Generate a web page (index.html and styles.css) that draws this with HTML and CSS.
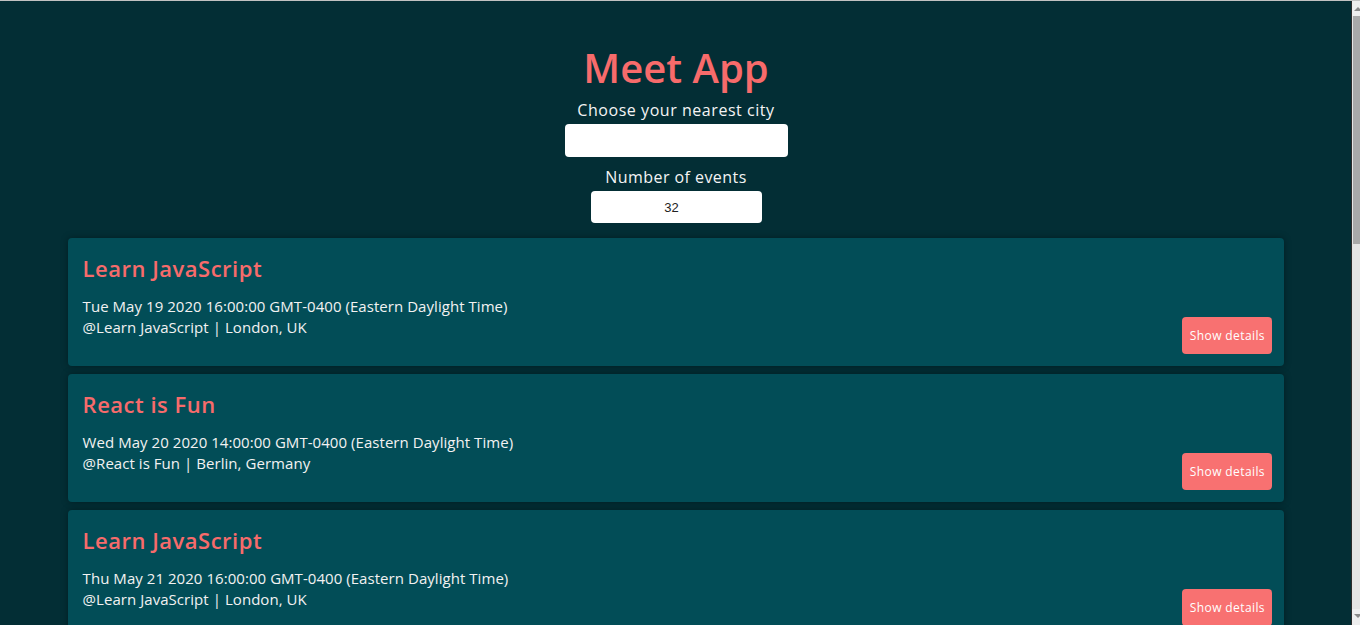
FILE: index.html
```html
<!DOCTYPE html>
<html lang="en">
<head>
<meta charset="utf-8">
<title>Meet App</title>
<link rel="stylesheet" href="styles.css">
</head>
<body>
<div class="app">
  <header class="header">
    <h1 class="app-title">Meet App</h1>
    <label class="field-label" for="city">Choose your nearest city</label>
    <input class="city-input" id="city" type="text" value="">
    <label class="field-label label-number" for="num">Number of events</label>
    <input class="number-input" id="num" type="text" value="32">
  </header>
  <ul class="event-list">
    <li class="event">
      <div class="event-info">
        <h2 class="event-title">Learn JavaScript</h2>
        <p class="event-line event-date">Tue May 19 2020 16:00:00 GMT-0400 (Eastern Daylight Time)</p>
        <p class="event-line">@Learn JavaScript | London, UK</p>
      </div>
      <button class="details-btn" type="button">Show details</button>
    </li>
    <li class="event">
      <div class="event-info">
        <h2 class="event-title">React is Fun</h2>
        <p class="event-line event-date">Wed May 20 2020 14:00:00 GMT-0400 (Eastern Daylight Time)</p>
        <p class="event-line">@React is Fun | Berlin, Germany</p>
      </div>
      <button class="details-btn" type="button">Show details</button>
    </li>
    <li class="event">
      <div class="event-info">
        <h2 class="event-title">Learn JavaScript</h2>
        <p class="event-line event-date">Thu May 21 2020 16:00:00 GMT-0400 (Eastern Daylight Time)</p>
        <p class="event-line">@Learn JavaScript | London, UK</p>
      </div>
      <button class="details-btn" type="button">Show details</button>
    </li>
    <li class="event">
      <div class="event-info">
        <h2 class="event-title">React is Fun</h2>
        <p class="event-line event-date">Fri May 22 2020 14:00:00 GMT-0400 (Eastern Daylight Time)</p>
        <p class="event-line">@React is Fun | Berlin, Germany</p>
      </div>
      <button class="details-btn" type="button">Show details</button>
    </li>
  </ul>
</div>
<div class="fake-scrollbar">
  <div class="sb-arrow sb-up"></div>
  <div class="sb-thumb"></div>
  <div class="sb-track"></div>
  <div class="sb-arrow sb-down"></div>
</div>
<div class="top-line"></div>
</body>
</html>
```

FILE: styles.css
```css
html {
  overflow: hidden;
  height: 100%;
}
body {
  margin: 0 8px 0 0;
  height: 100%;
  background: #032e35;
  font-family: "Open Sans", "DejaVu Sans", sans-serif;
  color: #f2f2f2;
}
.app {
  display: flex;
  flex-direction: column;
  align-items: center;
}
.header {
  display: flex;
  flex-direction: column;
  align-items: center;
  padding-top: 44px;
}
.app-title {
  margin: 0;
  font-size: 40px;
  line-height: 48px;
  font-weight: 600;
  color: #f76b6b;
}
.field-label {
  display: block;
  margin-top: 7px;
  font-size: 16px;
  line-height: 22px;
  letter-spacing: 0.55px;
  color: #f4f4f4;
}
.label-number {
  margin-top: 9px;
  letter-spacing: 0.45px;
}
.city-input,
.number-input {
  display: block;
  margin-top: 3px;
  border: none;
  border-radius: 4px;
  background: #fff;
  padding: 0;
  outline: none;
  font-family: "Liberation Sans", Arial, sans-serif;
  font-size: 13px;
  color: #222;
  text-align: center;
}
.city-input {
  width: 223px;
  height: 33px;
}
.number-input {
  width: 171px;
  height: 32px;
  margin-top: 3px;
  padding-right: 9px;
  box-sizing: border-box;
}
.event-list {
  list-style: none;
  margin: 15px 0 0;
  padding: 0;
  width: 90%;
  display: flex;
  flex-direction: column;
  gap: 8px;
}
.event {
  display: flex;
  justify-content: space-between;
  align-items: flex-end;
  background: #024d57;
  border-radius: 4px;
  padding: 15px 12px 12px 15px;
  box-shadow: 0 0 7px rgba(0, 0, 0, 0.35);
}
.event-info {
  padding-bottom: 16px;
}
.event-title {
  margin: 0 0 13px;
  font-size: 22px;
  line-height: 30px;
  font-weight: 600;
  letter-spacing: 0.5px;
  color: #f76b6b;
}
.event-line {
  margin: 0;
  font-size: 15px;
  line-height: 21px;
  letter-spacing: 0.05px;
  color: #f2f2f2;
}
.details-btn {
  width: 90px;
  height: 37px;
  border: none;
  border-radius: 4px;
  background: #f87171;
  color: #fff;
  font-family: "Open Sans", sans-serif;
  font-size: 12px;
  font-weight: 500;
  letter-spacing: 0.4px;
  padding: 0;
  cursor: pointer;
}
.fake-scrollbar {
  position: fixed;
  top: 0;
  right: 0;
  bottom: 0;
  width: 8px;
  border-left: 1px solid #2b2b2b;
  background: #e6e6e6;
  display: flex;
  flex-direction: column;
}
.sb-arrow {
  height: 16px;
  position: relative;
  background: #eeeeee;
}
.sb-up::after,
.sb-down::after {
  content: "";
  position: absolute;
  left: 2px;
  border-left: 4px solid transparent;
  border-right: 4px solid transparent;
}
.sb-up::after {
  top: 7px;
  border-bottom: 4px solid #8a8a8a;
}
.sb-down::after {
  top: 5px;
  border-top: 4px solid #8a8a8a;
}
.sb-thumb {
  height: 228px;
  margin-left: 1px;
  background: #a9a9a9;
}
.sb-track {
  flex: 1;
  background: #e4e4e4;
}
.top-line {
  position: fixed;
  top: 0;
  left: 0;
  right: 0;
  height: 1px;
  background: #c2c2c2;
}
```
